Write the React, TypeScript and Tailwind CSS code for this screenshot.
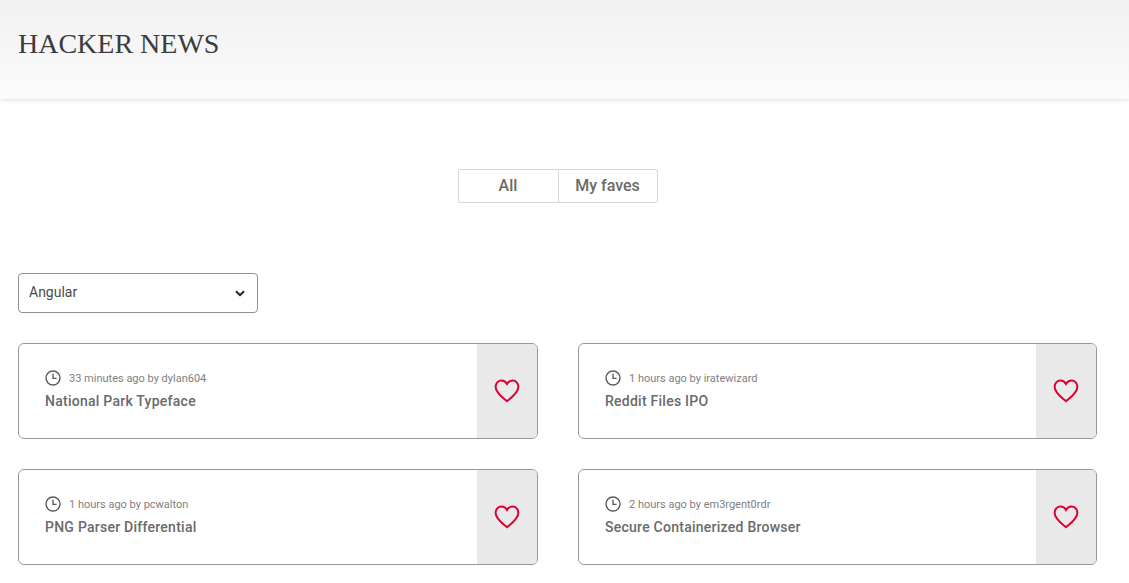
import React from 'react';

interface Story {
    age: string;
    title: string;
}

const stories: Story[] = [
    { age: '33 minutes ago by dylan604', title: 'National Park Typeface' },
    { age: '1 hours ago by iratewizard', title: 'Reddit Files IPO' },
    { age: '1 hours ago by pcwalton', title: 'PNG Parser Differential' },
    { age: '2 hours ago by em3rgent0rdr', title: 'Secure Containerized Browser' },
];

const ClockIcon = () => (
    <svg width="16" height="16" viewBox="0 0 16 16" fill="none" stroke="#5c5c5c" strokeWidth="1.4" className="shrink-0">
        <circle cx="8" cy="8" r="7" />
        <path d="M8 3.8V8.4H11.6" />
    </svg>
);

const HeartIcon = () => (
    <svg width="26" height="24" viewBox="0 0 26 24" fill="none" stroke="#dd0031" strokeWidth="2">
        <path d="M13 22.2C8.6 18.6 1.6 14 1.6 7.8C1.6 4.2 4.2 1.6 7.4 1.6C9.8 1.6 11.8 2.8 13 5C14.2 2.8 16.2 1.6 18.6 1.6C21.8 1.6 24.4 4.2 24.4 7.8C24.4 14 17.4 18.6 13 22.2Z" />
    </svg>
);

const StoryCard: React.FC<{ story: Story }> = ({ story }) => (
    <div className="h-[96px] flex border border-[#979797] rounded-md overflow-hidden bg-white">
        <div className="flex-1 pl-[26px] pt-[26px]">
            <div className="flex items-center gap-2 h-4 text-[11px] text-[#808080]">
                <ClockIcon />
                <span className="pt-[2px]">{story.age}</span>
            </div>
            <div className="mt-[5px] text-sm leading-5 font-medium tracking-[0.25px] text-[#6a6a6a]">{story.title}</div>
        </div>
        <div className="w-[60px] bg-[#e9e9e9] flex items-center justify-center">
            <HeartIcon />
        </div>
    </div>
);

const App: React.FC = () => (
    <div className="w-[1129px] h-[583px] overflow-hidden bg-white font-['Roboto',sans-serif]">
        <header className="h-[99px] flex items-center pl-[18px] bg-gradient-to-b from-[#f1f1f1] to-[#fbfbfb] shadow-[0_1px_4px_rgba(0,0,0,0.14)]">
            <h1 className="font-['Liberation_Serif',serif] text-[28px] text-[#3c3c3c] pb-[12px]">HACKER NEWS</h1>
        </header>
        <div className="flex justify-center mt-[70px] pr-[14px]">
            <div className="flex h-[34px] border border-[#d6d6d6] rounded-[2px]">
                <div className="w-[100px] flex items-center justify-center border-r border-[#d6d6d6] text-base font-medium text-[#6a6a6a]">
                    All
                </div>
                <div className="w-[98px] flex items-center justify-center text-base font-medium text-[#6a6a6a]">
                    My faves
                </div>
            </div>
        </div>
        <div className="ml-[18px] mt-[70px] w-[240px] h-[40px] flex items-center justify-between pl-[10px] pr-[11px] border border-[#8f8f8f] rounded-[4px] text-sm text-[#4a4a4a]">
            <span className="pb-[2px]">Angular</span>
            <svg width="10" height="7" viewBox="0 0 10 7" fill="none" stroke="#222" strokeWidth="2" className="mr-[1px]">
                <path d="M1 1.2L5 5.2L9 1.2" />
            </svg>
        </div>
        <div className="ml-[18px] mt-[30px] w-[1079px] grid grid-cols-[520px_519px] gap-x-[40px] gap-y-[30px]">
            {stories.map((s) => (
                <StoryCard key={s.title} story={s} />
            ))}
        </div>
    </div>
);

export default App;
